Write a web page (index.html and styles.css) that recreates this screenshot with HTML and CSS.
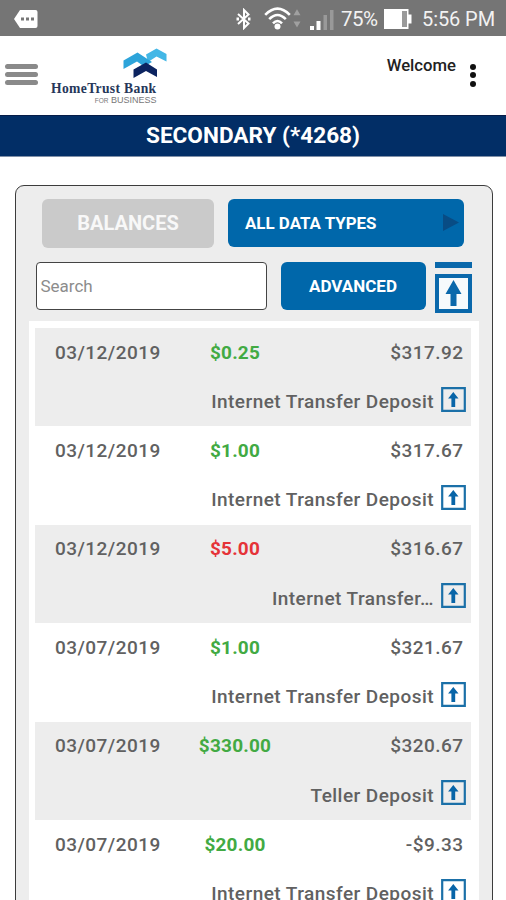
FILE: index.html
```html
<!DOCTYPE html>
<html lang="en">
<head>
<meta charset="utf-8">
<title>HomeTrust Bank</title>
<link rel="stylesheet" href="styles.css">
</head>
<body>
<svg class="defs" width="0" height="0">
  <symbol id="up" viewBox="0 0 25 25"><path d="M1.2 1.2h22.600v22.600H1.200z" fill="none" stroke="#1b70a8" stroke-width="2.200"/><path d="M12.300 5l5.200 6.500h-3.300v8.500h-3.800v-8.500H7.100z" fill="#0865a8"/></symbol>
</svg>
<div class="status">
  <svg class="note" width="24" height="18" viewBox="0 0 24 18"><path d="M6 0h15.500q2 0 2 2v14q0 2-2 2H6L0 9z" fill="#fff"/><path d="M7 7.500h3v3H7zM12 7.500h3v3h-3zM17 7.500h3v3h-3z" fill="#777"/></svg>
  <svg class="bt" width="15" height="22" viewBox="0 0 15 22"><path d="M2 6l10.500 9.500L8 20V2l4.500 4.500L2 16" fill="none" stroke="#fff" stroke-width="2"/><path d="M.5 9.500h2.500v3H.5zM12 9.500h2.500v3H12z" fill="#fff"/></svg>
  <svg class="wifi" width="38" height="24" viewBox="0 0 38 24"><g fill="none" stroke="#fff" stroke-width="2.600"><path d="M1.200 7.800Q13.500-4.600 25.800 7.800M5.200 12.200Q13.500 3.700 21.800 12.200M9 16.300Q13.500 11.700 18 16.300"/></g><circle cx="13.500" cy="19.500" r="3" fill="#fff"/><path d="M29.500 8.200l3.500-6 3.500 6zM29.500 14.500l3.500 6 3.500-6z" fill="#a0a0a0"/></svg>
  <svg class="signal" width="25" height="21" viewBox="0 0 25 21"><path d="M1 17h4v4H1zM7.500 12h4v9h-4z" fill="#fff"/><path d="M14.500 6H18v15h-3.500zM21 1h3.500v20H21z" fill="#999"/></svg>
  <span class="pct">75%</span>
  <svg class="batt" width="28" height="20" viewBox="0 0 28 20"><path d="M0 0h24.500v5.500h3v9h-3V20H0z" fill="#fff"/><path d="M18 2h5v16h-5z" fill="#9a9a9a"/></svg>
  <span class="time">5:56 PM</span>
</div>
<header class="head">
  <div class="burger"><i></i><i></i><i></i></div>
  <div class="logo">
    <svg width="44" height="30" viewBox="0 0 44 30"><path d="M23 6.500L33.500.5 43.500 6v7.500L33.500 8.500 25 14z" fill="#43b7e6"/><path d="M.5 12.500L14.500 4.500 29 14 21 18.500 14 13.500 .5 21z" fill="#2da4da"/><path d="M10.500 21.500L23 14.500 34 21.500V29L23 23 10.500 30z" fill="#0c2460"/></svg>
    <div class="name">HomeTrust Bank</div>
    <div class="sub"><small>FOR</small> BUSINESS</div>
  </div>
  <span class="welcome">Welcome</span>
  <div class="dots"><i></i><i></i><i></i></div>
</header>
<h1 class="title"><span>SECONDARY (*4268)</span></h1>
<main class="panel">
  <div class="bar first">
    <button class="btn bal">BALANCES</button>
    <button class="btn types"><span>ALL DATA TYPES</span><svg width="16" height="18" viewBox="0 0 16 18"><path d="M0 0l16 8.500-16 8.500z" fill="#084c85"/></svg></button>
  </div>
  <div class="bar second">
    <div class="search">Search</div>
    <button class="btn adv">ADVANCED</button>
    <svg class="top" width="37" height="51" viewBox="0 0 37 51"><path d="M0 0h37v6H0z" fill="#0a68ab"/><path d="M2 14h33v35H2z" fill="#f6fafc" stroke="#0a68ab" stroke-width="4"/><path d="M18.500 18l8 14h-5V44h-6V32h-5z" fill="#0a68ab"/></svg>
  </div>
  <div class="list">
    <div class="row"><span class="date">03/12/2019</span><span class="amt">$0.25</span><span class="total">$317.92</span><span class="desc">Internet Transfer Deposit</span><svg class="up"><use href="#up"/></svg></div>
    <div class="row"><span class="date">03/12/2019</span><span class="amt">$1.00</span><span class="total">$317.67</span><span class="desc">Internet Transfer Deposit</span><svg class="up"><use href="#up"/></svg></div>
    <div class="row"><span class="date">03/12/2019</span><span class="amt debit">$5.00</span><span class="total">$316.67</span><span class="desc">Internet Transfer…</span><svg class="up"><use href="#up"/></svg></div>
    <div class="row"><span class="date">03/07/2019</span><span class="amt">$1.00</span><span class="total">$321.67</span><span class="desc">Internet Transfer Deposit</span><svg class="up"><use href="#up"/></svg></div>
    <div class="row"><span class="date">03/07/2019</span><span class="amt">$330.00</span><span class="total">$320.67</span><span class="desc">Teller Deposit</span><svg class="up"><use href="#up"/></svg></div>
    <div class="row"><span class="date">03/07/2019</span><span class="amt">$20.00</span><span class="total">-$9.33</span><span class="desc">Internet Transfer Deposit</span><svg class="up"><use href="#up"/></svg></div>
  </div>
</main>
</body>
</html>
```
FILE: styles.css
```css
* { box-sizing: border-box; }
html, body { height: 900px; overflow: hidden; }
body { margin: 0; background: #fff; font-family: Roboto, "Liberation Sans", sans-serif; display: flex; flex-direction: column; }
.defs { position: absolute; }
svg { display: block; flex: none; }
span, .name, .sub { white-space: nowrap; }

.status { height: 35.5px; flex: none; background: #757575; color: #f2f2f2; display: flex; align-items: center; padding: 2px 11px 0 14px; font-size: 20.5px; line-height: 24px; }
.bt { margin-left: 198px; }
.wifi { margin-left: 13px; }
.signal { margin: 2px 0 0 7px; }
.pct { width: 37px; margin-left: 7px; letter-spacing: -.5px; }
.batt { margin-left: 6px; }
.time { margin-left: auto; font-size: 20px; letter-spacing: -.1px; }

.head { height: 79px; flex: none; display: flex; align-items: flex-start; padding-left: 5px; }
.burger { width: 33px; margin-top: 28.5px; display: flex; flex-direction: column; gap: 3px; }
.burger i { height: 5px; border-radius: 2.5px; background: #8a8a8a; }
.logo { width: 106px; margin: 12.5px 0 0 12.5px; display: flex; flex-direction: column; align-items: flex-end; }
.logo svg { margin-right: -10px; }
.name { font: 700 13.6px/15px "Liberation Serif", serif; color: #26375a; letter-spacing: .35px; margin-top: 2.5px; }
.sub { font: 9px/10px "Liberation Sans", sans-serif; color: #777; margin-top: -.5px; }
.sub small { font-size: 6.5px; }
.welcome { margin: 20.5px 0 0 auto; font-weight: 500; font-size: 16.7px; line-height: 20px; color: #222; }
.dots { width: 6px; margin: 28px 30px 0 14px; display: flex; flex-direction: column; gap: 2.5px; }
.dots i { height: 6px; border-radius: 50%; background: #111; }

.title { height: 42px; flex: none; margin: 0; background: #022e66; border-top: 1.5px solid #061c48; border-bottom: 1px solid #8090a8; color: #fff; font-size: 22.6px; font-weight: 700; line-height: 40px; text-align: center; }

.panel { flex: none; height: 760px; width: 478px; margin: 28.5px 0 0 14.5px; border: 1.5px solid #3c3c3c; border-radius: 9px; background: #ededed; }
.bar { display: flex; }
.btn { border: 0; border-radius: 6px; padding: 0; font: 700 19px/24px Roboto, sans-serif; color: #fff; background: #0067aa; height: 48px; }
.first { padding: 12.5px 0 0 26.5px; gap: 14px; }
.bal { width: 172px; height: 49px; background: #cacaca; color: #f8f8f8; font-size: 20px; }
.types { width: 236px; display: flex; align-items: center; justify-content: space-between; padding: 0 5px 0 17px; font-size: 16.9px; }
.second { padding: 14px 0 0 20px; }
.search { width: 231.5px; height: 48px; border: 1.5px solid #444; border-radius: 4px; background: #fff; color: #8c8c8c; font-size: 17px; line-height: 46px; padding-left: 4px; }
.adv { width: 145px; margin-left: 13.5px; font-size: 17px; }
.top { margin-left: 9.5px; }
.list { margin: 8px 0 0 13px; width: 450px; height: 600px; background: #fff; padding: 7.5px 8px 0 6.5px; }
.row { height: 98.45px; display: grid; grid-template-columns: 143px 114px 1fr 5px 25px 4.5px; grid-template-rows: 48px 50px; font-size: 19px; font-weight: 500; color: #616161; line-height: 24px; letter-spacing: .45px; }
.row:nth-child(odd) { background: #ededed; }
.date { grid-area: 1 / 1; padding: 12.5px 0 0 20px; }
.amt { grid-area: 1 / 2; padding-top: 12.5px; text-align: center; color: #42aa43; font-weight: 700; letter-spacing: .2px; }
.debit { color: #e53338; }
.total { grid-area: 1 / 3 / 2 / 6; padding: 12.5px 2.5px 0 0; text-align: right; }
.desc { grid-area: 2 / 1 / 3 / 4; padding: 14px 2px 0 0; text-align: right; }
.up { grid-area: 2 / 5; width: 25px; height: 25px; margin-top: 10.5px; }
```
